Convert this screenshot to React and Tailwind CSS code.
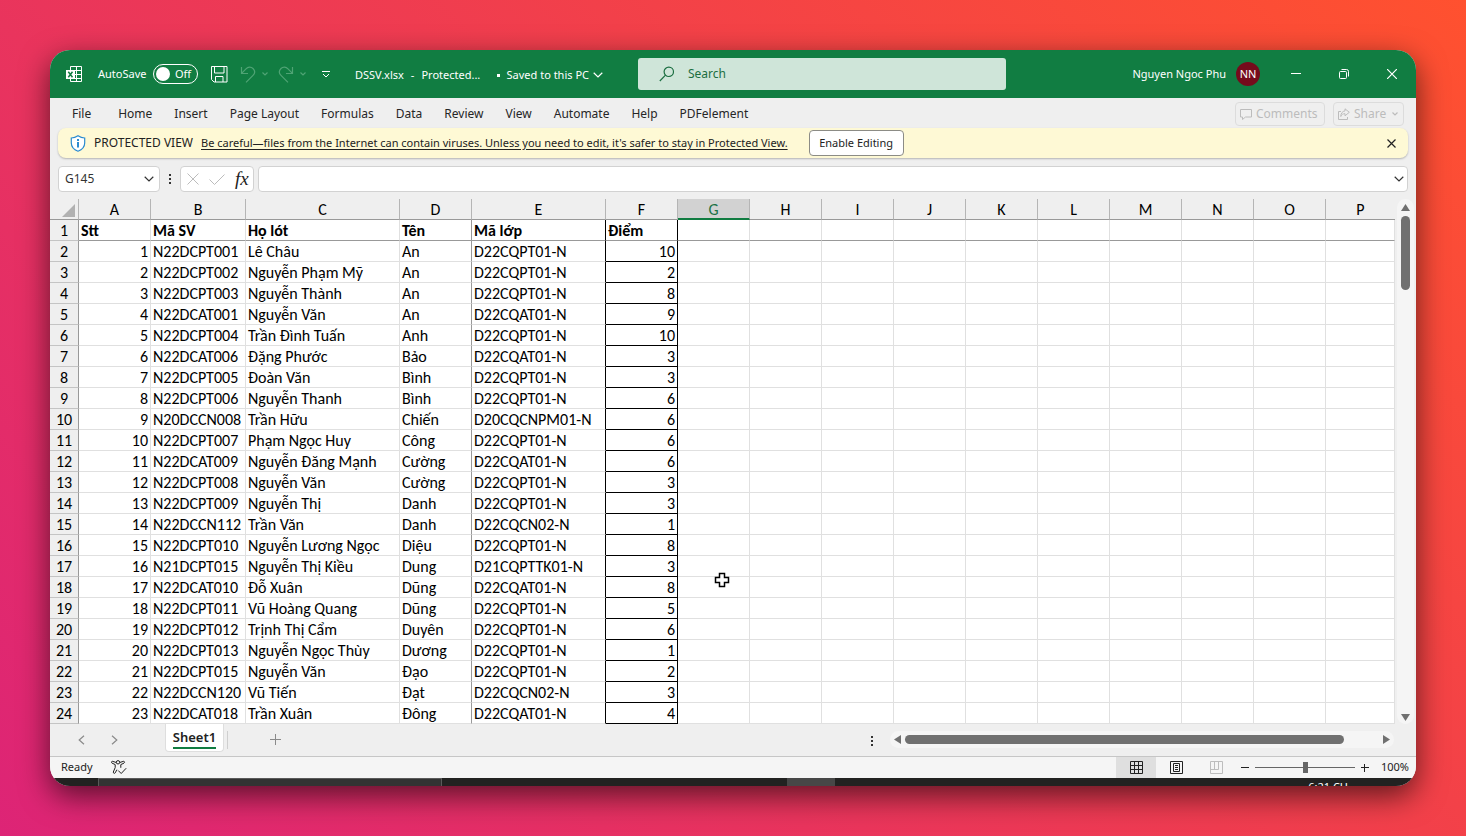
import React from "react";

const TABS = ["Home", "Insert", "Page Layout", "Formulas", "Data", "Review", "View", "Automate", "Help", "PDFelement"];

const COLUMNS = [
  { name: "A", width: "w-[72px]" },
  { name: "B", width: "w-[95px]" },
  { name: "C", width: "w-[154px]" },
  { name: "D", width: "w-[72px]" },
  { name: "E", width: "w-[134px]" },
  { name: "F", width: "w-[72px]" },
  { name: "G", width: "w-[72px]" },
  { name: "H", width: "w-[72px]" },
  { name: "I", width: "w-[72px]" },
  { name: "J", width: "w-[72px]" },
  { name: "K", width: "w-[72px]" },
  { name: "L", width: "w-[72px]" },
  { name: "M", width: "w-[72px]" },
  { name: "N", width: "w-[72px]" },
  { name: "O", width: "w-[72px]" },
  { name: "P", width: "" },
];

const ROWS = [
  ["Stt", "Mã SV", "Họ lót", "Tên", "Mã lớp", "Điểm"],
  ["1", "N22DCPT001", "Lê Châu", "An", "D22CQPT01-N", "10"],
  ["2", "N22DCPT002", "Nguyễn Phạm Mỹ", "An", "D22CQPT01-N", "2"],
  ["3", "N22DCPT003", "Nguyễn Thành", "An", "D22CQPT01-N", "8"],
  ["4", "N22DCAT001", "Nguyễn Văn", "An", "D22CQAT01-N", "9"],
  ["5", "N22DCPT004", "Trần Đình Tuấn", "Anh", "D22CQPT01-N", "10"],
  ["6", "N22DCAT006", "Đặng Phước", "Bảo", "D22CQAT01-N", "3"],
  ["7", "N22DCPT005", "Đoàn Văn", "Bình", "D22CQPT01-N", "3"],
  ["8", "N22DCPT006", "Nguyễn Thanh", "Bình", "D22CQPT01-N", "6"],
  ["9", "N20DCCN008", "Trần Hữu", "Chiến", "D20CQCNPM01-N", "6"],
  ["10", "N22DCPT007", "Phạm Ngọc Huy", "Công", "D22CQPT01-N", "6"],
  ["11", "N22DCAT009", "Nguyễn Đăng Mạnh", "Cường", "D22CQAT01-N", "6"],
  ["12", "N22DCPT008", "Nguyễn Văn", "Cường", "D22CQPT01-N", "3"],
  ["13", "N22DCPT009", "Nguyễn Thị", "Danh", "D22CQPT01-N", "3"],
  ["14", "N22DCCN112", "Trần Văn", "Danh", "D22CQCN02-N", "1"],
  ["15", "N22DCPT010", "Nguyễn Lương Ngọc", "Diệu", "D22CQPT01-N", "8"],
  ["16", "N21DCPT015", "Nguyễn Thị Kiều", "Dung", "D21CQPTTK01-N", "3"],
  ["17", "N22DCAT010", "Đỗ Xuân", "Dũng", "D22CQAT01-N", "8"],
  ["18", "N22DCPT011", "Vũ Hoàng Quang", "Dũng", "D22CQPT01-N", "5"],
  ["19", "N22DCPT012", "Trịnh Thị Cẩm", "Duyên", "D22CQPT01-N", "6"],
  ["20", "N22DCPT013", "Nguyễn Ngọc Thùy", "Dương", "D22CQPT01-N", "1"],
  ["21", "N22DCPT015", "Nguyễn Văn", "Đạo", "D22CQPT01-N", "2"],
  ["22", "N22DCCN120", "Vũ Tiến", "Đạt", "D22CQCN02-N", "3"],
  ["23", "N22DCAT018", "Trần Xuân", "Đông", "D22CQAT01-N", "4"],
];

function Icon({ w, h, className = "", children, sw = 1 }) {
  return (
    <svg
      width={w}
      height={h}
      viewBox={`0 0 ${w} ${h}`}
      fill="none"
      stroke="currentColor"
      strokeWidth={sw}
      className={`shrink-0 ${className}`}
      aria-hidden="true"
    >
      {children}
    </svg>
  );
}

function Chevron({ className }) {
  return (
    <Icon w={10} h={6} className={className} sw={1.2}>
      <path d="M.7.8 5 5 9.3.8" />
    </Icon>
  );
}

function SmallChevron({ className }) {
  return (
    <Icon w={6} h={4} className={className} sw={1.2}>
      <path d="M.5.5 3 3 5.500.5" />
    </Icon>
  );
}

function Dots({ className }) {
  return (
    <Icon w={2} h={10} className={className}>
      <path d="M0 0h2v2H0zM0 4h2v2H0zM0 8h2v2H0z" fill="currentColor" stroke="none" />
    </Icon>
  );
}

function TitleBar() {
  return (
    <header className="flex h-12 shrink-0 items-center bg-[#117d42] text-[11px] text-white">
      <Icon w={17} h={17} className="ml-4">
        <path d="M4.500 4V.5h11v15h-11V13M4.500 4.500h11M9 8.500h6.500M4.500 12.500h11M10.500.5v15" />
        <path d="M0 4h9v9H0z" fill="currentColor" stroke="none" />
        <path d="m2.300 5.800 4.200 5.400M6.500 5.800l-4.200 5.400" stroke="#117d42" strokeWidth="1.500" />
      </Icon>
      <label className="ml-[15px] flex w-[100px] items-center justify-between whitespace-nowrap">
        AutoSave
        <span className="relative flex h-5 w-[45px] items-center rounded-full border border-white">
          <input type="checkbox" role="switch" className="absolute inset-0 m-0 size-full appearance-none" />
          <span className="ml-[2px] size-[14px] rounded-full bg-white" />
          <span className="ml-[5px]">Off</span>
        </span>
      </label>
      <button aria-label="Save" className="ml-[13px]">
        <Icon w={17} h={17}>
          <path d="M.5.5h15.500v15.500H3L.5 13.500zM3.500.5v6.500h9.500V.5M4.500 16v-5.500h7.500V16" />
        </Icon>
      </button>
      <button aria-label="Undo" className="ml-3 flex items-center gap-[6px] text-[#4fa374]">
        <Icon w={16} h={17} sw={1.2}>
          <path d="M1.500 1v6.500H8M1.800 7.200 6 2.800C8 .7 11 .5 13 2.500s2 4.800 0 6.800L6 16.300" />
        </Icon>
        <SmallChevron />
      </button>
      <button aria-label="Redo" className="ml-[10px] flex items-center gap-[6px] text-[#4fa374]">
        <Icon w={16} h={17} sw={1.2}>
          <path d="M14.500 1v6.500H8M14.200 7.200 10 2.800C8 .7 5 .5 3 2.500s-2 4.800 0 6.800l7 7" />
        </Icon>
        <SmallChevron />
      </button>
      <button aria-label="Customize toolbar" className="ml-4">
        <Icon w={8} h={7}>
          <path d="M0 .5h8M1 3l3 3 3-3" />
        </Icon>
      </button>
      <div className="ml-[25px] flex w-[250px] shrink-0 items-center pt-[2px] whitespace-nowrap text-[11px]">
        <span>DSSV.xlsx</span>
        <span className="mx-[7px]">-</span>
        <span>Protected...</span>
        <span className="ml-auto size-[3px] bg-white" />
        <button className="mr-[2px] ml-[7px] flex items-center gap-1">
          Saved to this PC
          <Chevron />
        </button>
      </div>
      <label className="ml-[33px] flex h-8 w-[368px] items-center rounded-[3px] bg-[#cfe5d9] text-[#1b6e41]">
        <Icon w={16} h={16} className="ml-[21px]" sw={1.2}>
          <circle cx="9.800" cy="5.800" r="4.700" />
          <path d="M6.500 9.200.8 15" />
        </Icon>
        <input
          aria-label="Search"
          placeholder="Search"
          className="ml-[13px] min-w-0 flex-1 bg-transparent text-[12px] outline-none placeholder:text-[#1b6e41]"
        />
      </label>
      <div className="ml-auto flex items-center gap-[10px] whitespace-nowrap">
        Nguyen Ngoc Phu
        <span className="flex size-6 items-center justify-center rounded-full bg-[#750b1c]">NN</span>
      </div>
      <button aria-label="Minimize" className="ml-3 flex h-full w-12 items-center justify-center">
        <Icon w={10} h={10}><path d="M0 4.500h10" /></Icon>
      </button>
      <button aria-label="Restore" className="flex h-full w-12 items-center justify-center">
        <Icon w={10} h={10}>
          <path d="M1.500 2.500h5a1 1 0 0 1 1 1v5a1 1 0 0 1-1 1h-5a1 1 0 0 1-1-1v-5a1 1 0 0 1 1-1zM2.500.5h5a2 2 0 0 1 2 2v5" />
        </Icon>
      </button>
      <button aria-label="Close" className="flex h-full w-12 items-center justify-center">
        <Icon w={10} h={10} sw={1.200}><path d="m0 0 10 10M10 0 0 10" /></Icon>
      </button>
    </header>
  );
}

function RibbonTabs() {
  return (
    <nav className="flex h-[30px] shrink-0 items-center pt-[2px] pr-3 pl-[22px] text-[12px] whitespace-nowrap text-[#262626]">
      <button className="mr-[27px]">File</button>
      <div className="flex gap-[22px]">
        {TABS.map((tab) => (
          <button key={tab}>{tab}</button>
        ))}
      </div>
      <button className="ml-auto flex h-6 w-[90px] items-center gap-1 rounded-[4px] border border-[#dcdcdc] pl-1 text-[#bcbcbc]">
        <Icon w={12} h={11}><path d="M.5.5h11v7.500H5.500L2.500 10.500V8h-2z" /></Icon>
        Comments
      </button>
      <button className="ml-2 flex h-6 w-[71px] items-center gap-1 rounded-[4px] border border-[#dcdcdc] pl-1 text-[#bcbcbc]">
        <Icon w={12} h={12}>
          <path d="M3 3.500H.5v8h9V9M7 .8l4.300 3.500L7 7.800V5.700C5 5.700 3.500 6.500 2.800 8.500 2.800 5.500 4.300 3.200 7 2.900z" />
        </Icon>
        Share
        <SmallChevron className="ml-[2px]" />
      </button>
    </nav>
  );
}

function ProtectedBanner() {
  return (
    <div className="mx-2 flex h-[30px] shrink-0 items-center rounded-lg bg-[#fef9d5] pr-3 pl-3 whitespace-nowrap text-[#222] shadow-[0_1px_2px_rgba(0,0,0,0.25)]">
      <Icon w={16} h={17} className="text-[#2b8bd0]" sw={1.200}>
        <path d="M8 .8C6 2.200 3.800 3 1.300 3v5c0 3.800 2.300 6.500 6.700 8.200 4.400-1.700 6.700-4.400 6.700-8.200V3C12.200 3 10 2.200 8 .8z" fill="#fff" />
        <path d="M8 4v2M8 7v5.500" strokeWidth="2" />
      </Icon>
      <span className="ml-2 text-[12px]">PROTECTED VIEW</span>
      <a href="#protected-view" className="ml-2 text-[11px] underline underline-offset-2">
        Be careful—files from the Internet can contain viruses. Unless you need to edit, it's safer to stay in Protected View.
      </a>
      <button className="ml-[21px] h-[26px] w-[95px] rounded-[4px] border border-[#8c8c86] bg-white text-[11px]">Enable Editing</button>
      <button aria-label="Dismiss" className="ml-auto">
        <Icon w={9} h={9} sw={1.200}><path d="m.5.5 8 8M8.500.5l-8 8" /></Icon>
      </button>
    </div>
  );
}

function FormulaBar() {
  return (
    <div className="mx-2 mt-2 mb-[7px] flex h-[26px] shrink-0 items-stretch text-[#333]">
      <div className="flex w-[102px] items-center rounded-[4px] border border-[#d2d2d2] bg-white pr-[5px] pl-[6px]">
        <input aria-label="Name box" defaultValue="G145" className="min-w-0 flex-1 bg-transparent text-[12px] outline-none" />
        <button aria-label="Show names"><Chevron /></button>
      </div>
      <Dots className="mx-[9px] self-center" />
      <div className="flex w-[74px] items-center rounded-[4px] border border-[#d2d2d2] bg-white pl-[6px] text-[#bcbcbc]">
        <button aria-label="Cancel">
          <Icon w={12} h={12}><path d="m.5.5 11 11M11.500.5l-11 11" /></Icon>
        </button>
        <button aria-label="Enter" className="ml-[10px]">
          <Icon w={16} h={11}><path d="m.5 5.500 5 5L15.500.5" /></Icon>
        </button>
        <button aria-label="Insert function" className="ml-[10px] font-['Liberation_Serif',serif] text-[19px] leading-6 text-[#222] italic">
          fx
        </button>
      </div>
      <div className="ml-1 flex flex-1 items-center rounded-[4px] border border-[#d2d2d2] bg-white pr-[3px]">
        <input aria-label="Formula" className="min-w-0 flex-1 bg-transparent px-2 text-[12px] outline-none" />
        <button aria-label="Expand formula bar"><Chevron /></button>
      </div>
    </div>
  );
}

function cellClass(rowIndex, colIndex) {
  const head = rowIndex === 0;
  let right = "border-r-[#e0e0e0]";
  if (colIndex === 3) right = "border-r-[#999]";
  if (colIndex === 4 || colIndex === 5) right = "border-r-black";
  let bottom = "border-b-[#e0e0e0]";
  if (colIndex === 5) bottom = "border-b-black";
  if (head) bottom = "border-b-[#999]";
  const align = !head && (colIndex === 0 || colIndex === 5) ? "text-right" : "text-left";
  return `h-[21px] border-r border-b px-[2px] pt-[2px] pb-0 ${right} ${bottom} ${align} ${head ? "font-bold" : ""}`;
}

function Sheet() {
  return (
    <table className="min-w-0 flex-1 table-fixed border-separate border-spacing-0 overflow-hidden bg-white font-[Carlito,Lato,'Noto_Sans',sans-serif] text-[16px] leading-[18px] whitespace-nowrap text-black">
      <colgroup>
        <col className="w-[29px]" />
        {COLUMNS.map((col) => (
          <col key={col.name} className={col.width} />
        ))}
      </colgroup>
      <thead>
        <tr>
          <th className="h-[21px] border-r border-b border-r-[#b5b5b5] border-b-[#999] bg-[#efefef] p-0 align-bottom">
            <Icon w={13} h={13} className="mb-[2px] ml-3">
              <path d="M13 0v13H0z" fill="#b1b1b1" stroke="none" />
            </Icon>
          </th>
          {COLUMNS.map((col) => (
            <th
              key={col.name}
              scope="col"
              className={
                col.name === "G"
                  ? "border-r border-b-2 border-r-[#b5b5b5] border-b-[#107c41] bg-[#d2d2d2] p-0 pt-[2px] leading-[17px] font-normal text-[#217346]"
                  : col.name === "P"
                    ? "border-b border-b-[#999] bg-[#efefef] p-0 pt-[2px] font-normal"
                    : "border-r border-b border-r-[#b5b5b5] border-b-[#999] bg-[#efefef] p-0 pt-[2px] font-normal"
              }
            >
              {col.name}
            </th>
          ))}
        </tr>
      </thead>
      <tbody>
        {ROWS.map((row, r) => (
          <tr key={r}>
            <th scope="row" className="h-[21px] border-r border-b border-r-[#999] border-b-[#c4c4c4] bg-[#efefef] p-0 pt-[2px] font-normal">
              {r + 1}
            </th>
            {COLUMNS.map((col, c) => (
              <td key={col.name} className={cellClass(r, c)}>{row[c]}</td>
            ))}
          </tr>
        ))}
      </tbody>
    </table>
  );
}

function VerticalScroll() {
  return (
    <div className="flex w-[21px] shrink-0 justify-center">
      <div className="flex w-[17px] flex-col items-center rounded-full bg-[#f5f5f5] text-[#707070]">
        <Icon w={9} h={7} className="mt-[5px]"><path d="M4.500 0 9 7H0z" fill="currentColor" stroke="none" /></Icon>
        <div className="mt-[5px] h-[74px] w-[9px] rounded-full bg-[#707070]" />
        <Icon w={9} h={7} className="mt-auto mb-[3px]"><path d="M4.500 7 0 0h9z" fill="currentColor" stroke="none" /></Icon>
      </div>
    </div>
  );
}

function SheetTabs() {
  return (
    <div className="flex h-8 shrink-0 items-center pr-[22px] pb-px">
      <button aria-label="Previous sheet" className="ml-7 text-[#8a8a8a]">
        <Icon w={7} h={10} sw={1.200}><path d="M6 .8 1.200 5 6 9.200" /></Icon>
      </button>
      <button aria-label="Next sheet" className="ml-[26px] text-[#8a8a8a]">
        <Icon w={7} h={10} sw={1.200}><path d="M1 .8 5.800 5 1 9.200" /></Icon>
      </button>
      <button className="ml-[47px] flex h-7 w-[59px] justify-center self-start rounded-b-[4px] border border-t-0 border-[#dedede] bg-white text-[13px] font-semibold text-[#222]">
        <span className="mt-[3px] h-[22px] border-b-2 border-[#107c41] leading-[20px]">Sheet1</span>
      </button>
      <div className="ml-[3px] h-[18px] w-px bg-[#cfcfcf]" />
      <button aria-label="New sheet" className="ml-[42px] text-[#8a8a8a]">
        <Icon w={11} h={11}><path d="M5.500 0v11M0 5.500h11" /></Icon>
      </button>
      <Dots className="mt-[2px] mr-[17px] ml-auto text-[#333]" />
      <div className="flex h-[17px] w-[504px] items-center rounded-full bg-[#f5f5f5] px-1 text-[#707070]">
        <Icon w={7} h={9}><path d="M0 4.500 7 0v9z" fill="currentColor" stroke="none" /></Icon>
        <div className="ml-1 h-[9px] w-[439px] rounded-full bg-[#707070]" />
        <Icon w={7} h={9} className="ml-auto"><path d="M7 4.500 0 0v9z" fill="currentColor" stroke="none" /></Icon>
      </div>
    </div>
  );
}

function StatusBar() {
  return (
    <footer className="flex h-[22px] shrink-0 items-center border-t border-[#c6c6c6] bg-[#f5f5f5] pr-[7px] text-[11px] text-[#222]">
      <span className="ml-[11px]">Ready</span>
      <Icon w={16} h={15} className="ml-[18px]">
        <circle cx="7" cy="2.300" r="1.700" />
        <path d="M5.300 2.500 1.500 1.300C.3 1.200.2 2.800 1 3.100L4.200 4.600v3L2.300 12c-.2 1.500 1.500 1.700 2 .8l1.500-3.100M8.700 2.500l3.800-1.200c1.200-.1 1.300 1.500.5 1.800L9.800 4.600v3.200M7.200 10.500l3 3 5-5.300" />
      </Icon>
      <button aria-label="Normal view" className="ml-auto flex h-full w-10 items-center justify-center bg-[#dfdfdf]">
        <Icon w={13} h={13}>
          <path d="M.5.5h12v12H.5zM4.500.5v12M8.500.5v12M.5 4.500h12M.5 8.500h12" />
        </Icon>
      </button>
      <button aria-label="Page layout view" className="flex h-full w-10 items-center justify-center">
        <Icon w={13} h={13}>
          <path d="M.5.5h12v12H.5zM3.500 2.500h6v8h-6zM5 4.500h3M5 6.500h3M5 8.500h3" />
        </Icon>
      </button>
      <button aria-label="Page break preview" className="flex h-full w-10 items-center justify-center text-[#bdbdbd]">
        <Icon w={13} h={13}>
          <path d="M.5.5h12v12H.5zM.5 8.500h8v-8M4.500.5v8" />
        </Icon>
      </button>
      <button aria-label="Zoom out" className="ml-[5px]">
        <Icon w={8} h={8}><path d="M0 3.500h8" /></Icon>
      </button>
      <input
        type="range"
        aria-label="Zoom"
        min="0"
        max="200"
        defaultValue="100"
        className="mx-[6px] h-[11px] w-[100px] appearance-none bg-[linear-gradient(#666,#666)] bg-[length:100%_1px] bg-center bg-no-repeat [&::-webkit-slider-thumb]:h-[11px] [&::-webkit-slider-thumb]:w-[5px] [&::-webkit-slider-thumb]:appearance-none [&::-webkit-slider-thumb]:bg-[#666]"
      />
      <button aria-label="Zoom in">
        <Icon w={8} h={8}><path d="M0 3.500h8M3.500 0v8" /></Icon>
      </button>
      <span className="w-10 text-right">100%</span>
    </footer>
  );
}

function Taskbar() {
  return (
    <div className="flex h-2 shrink-0 overflow-hidden bg-[#222221]">
      <div className="ml-12 w-[344px] border-x border-t border-[#5a5a5a] bg-[#333]" />
      <div className="ml-[345px] w-12 bg-[#474747]" />
      <div className="mt-[3px] mr-[68px] ml-auto text-[11px] leading-[12px] text-white">6:21 CH</div>
    </div>
  );
}

export default function App() {
  return (
    <div className="min-h-screen bg-[linear-gradient(45deg,#dd2476,#ff512f)] p-[50px] font-['Noto_Sans',sans-serif]">
      <main className="relative flex flex-col overflow-hidden rounded-[20px] bg-[#efefef] shadow-[0_10px_30px_rgba(0,0,0,0.6)]">
        <TitleBar />
        <RibbonTabs />
        <ProtectedBanner />
        <FormulaBar />
        <div className="flex">
          <Sheet />
          <VerticalScroll />
        </div>
        <SheetTabs />
        <StatusBar />
        <Taskbar />
        <Icon w={16} h={16} className="absolute top-[522px] left-[664px]">
          <path d="M5.500 1.500h5v4h4v5h-4v4h-5v-4h-4v-5h4z" fill="#fff" stroke="#000" strokeWidth="1.500" />
        </Icon>
      </main>
    </div>
  );
}
